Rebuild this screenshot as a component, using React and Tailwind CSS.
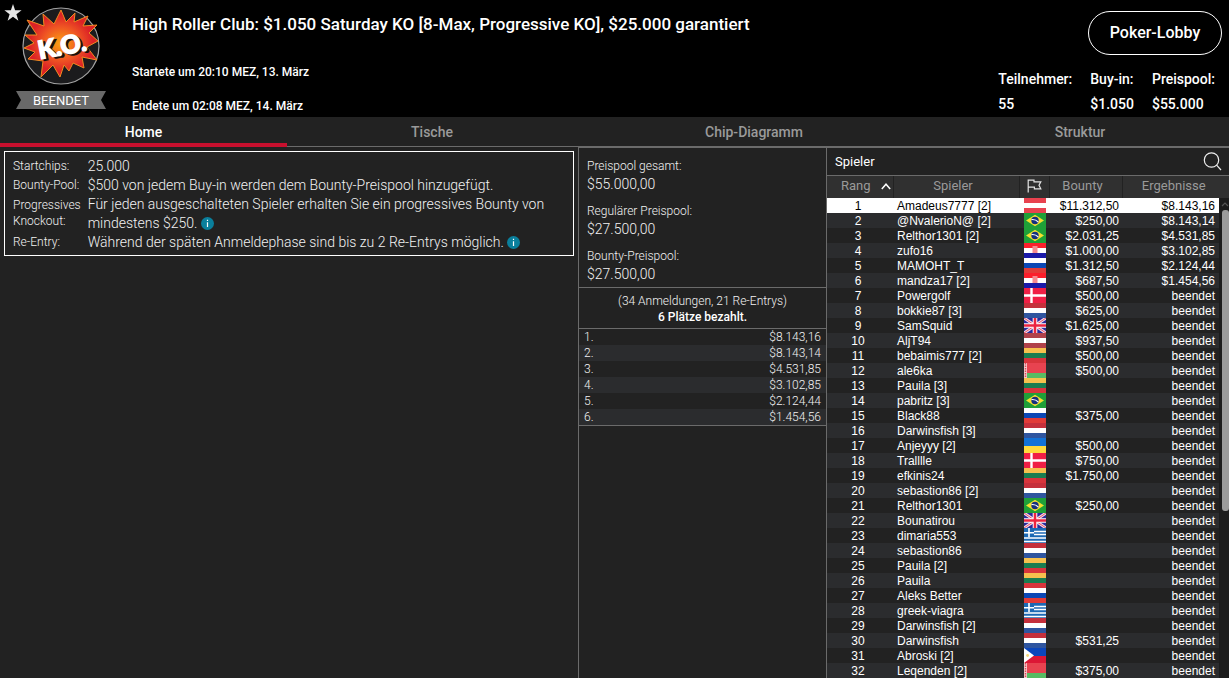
import React from "react";

const players = [
  [1, "Amadeus7777 [2]", "at", "$11.312,50", "$8.143,16"],
  [2, "@NvalerioN@ [2]", "br", "$250,00", "$8.143,14"],
  [3, "Relthor1301 [2]", "br", "$2.031,25", "$4.531,85"],
  [4, "zufo16", "hr", "$1.000,00", "$3.102,85"],
  [5, "MAMOHT_T", "ru", "$1.312,50", "$2.124,44"],
  [6, "mandza17 [2]", "hr", "$687,50", "$1.454,56"],
  [7, "Powergolf", "dk", "$500,00", "beendet"],
  [8, "bokkie87 [3]", "nl", "$625,00", "beendet"],
  [9, "SamSquid", "gb", "$1.625,00", "beendet"],
  [10, "AljT94", "lv", "$937,50", "beendet"],
  [11, "bebaimis777 [2]", "lt", "$500,00", "beendet"],
  [12, "ale6ka", "by", "$500,00", "beendet"],
  [13, "Pauila [3]", "lt", "", "beendet"],
  [14, "pabritz [3]", "br", "", "beendet"],
  [15, "Black88", "ru", "$375,00", "beendet"],
  [16, "Darwinsfish [3]", "nl", "", "beendet"],
  [17, "Anjeyyy [2]", "ua", "$500,00", "beendet"],
  [18, "Tralllle", "dk", "$750,00", "beendet"],
  [19, "efkinis24", "lt", "$1.750,00", "beendet"],
  [20, "sebastion86 [2]", "nl", "", "beendet"],
  [21, "Relthor1301", "br", "$250,00", "beendet"],
  [22, "Bounatirou", "gb", "", "beendet"],
  [23, "dimaria553", "gr", "", "beendet"],
  [24, "sebastion86", "nl", "", "beendet"],
  [25, "Pauila [2]", "lt", "", "beendet"],
  [26, "Pauila", "lt", "", "beendet"],
  [27, "Aleks Better", "ru", "", "beendet"],
  [28, "greek-viagra", "gr", "", "beendet"],
  [29, "Darwinsfish [2]", "nl", "", "beendet"],
  [30, "Darwinsfish", "nl", "$531,25", "beendet"],
  [31, "Abroski [2]", "ph", "", "beendet"],
  [32, "Leqenden [2]", "by", "$375,00", "beendet"],
];

const payouts = ["$8.143,16", "$8.143,14", "$4.531,85", "$3.102,85", "$2.124,44", "$1.454,56"];

const stripes = {
  at: ["#e8424f", "#ffffff", "#e8424f"],
  hr: ["#fb1f2b", "#ffffff", "#1a1aa8"],
  ru: ["#ffffff", "#0b47b5", "#e23b38"],
  nl: ["#c5303c", "#ffffff", "#2f559f"],
  lv: ["#b0414a", "#ffffff", "#b0414a"],
  lt: ["#f6c04e", "#1a7d50", "#d8353c"],
};

function Flag({ code }) {
  const bands = stripes[code];
  return (
    <svg viewBox="0 0 22 15" className="block h-[15px] w-[22px]" aria-label={code}>
      {bands && bands.map((c, i) => <rect key={i} y={i * 5} width="22" height="5" fill={c} />)}
      {code === "hr" && <rect x="8.5" y="3" width="5" height="7" fill="#f58a90" />}
      {code === "br" && (
        <>
          <rect width="22" height="15" fill="#1fa038" />
          <path d="M11 1.8 20 7.5 11 13.2 2 7.5Z" fill="#f7df2f" />
          <circle cx="11" cy="7.5" r="3.7" fill="#16307c" />
          <path d="M7.5 6.6c2.6-.3 5 .5 6.8 2.4" stroke="#fff" strokeWidth="1.1" fill="none" />
        </>
      )}
      {code === "dk" && (
        <>
          <rect width="22" height="15" fill="#f01f45" />
          <path d="M7.5 0V15M0 7.5H22" stroke="#fff" strokeWidth="2.4" />
        </>
      )}
      {code === "gb" && (
        <>
          <rect width="22" height="15" fill="#2b2a9c" />
          <path d="M0 0 22 15M22 0 0 15" stroke="#f4dbe6" strokeWidth="3" />
          <path d="M0 0 22 15M22 0 0 15" stroke="#e5526a" strokeWidth="1" />
          <path d="M11 0V15M0 7.5H22" stroke="#fff" strokeWidth="4.6" />
          <path d="M11 0V15M0 7.5H22" stroke="#ec2440" strokeWidth="2.6" />
        </>
      )}
      {code === "by" && (
        <>
          <rect width="22" height="10" fill="#e84350" />
          <rect y="10" width="22" height="5" fill="#57bb63" />
          <rect width="3" height="15" fill="#f3c9cb" />
          <path d="M1.5 0V15" stroke="#d94a55" strokeWidth="1.4" strokeDasharray="1.5 1" />
        </>
      )}
      {code === "ua" && (
        <>
          <rect width="22" height="8" fill="#1272d6" />
          <rect y="8" width="22" height="7" fill="#ffda3c" />
        </>
      )}
      {code === "gr" && (
        <>
          <rect width="22" height="15" fill="#1c69b4" />
          <path d="M10 3.5H22M10 6.5H22M0 10H22M0 13.5H22" stroke="#fff" strokeWidth="1.3" />
          <path d="M5 0V9M0 4.8H10" stroke="#fff" strokeWidth="1.6" />
        </>
      )}
      {code === "ph" && (
        <>
          <rect width="22" height="8" fill="#0c46bb" />
          <rect y="8" width="22" height="7" fill="#dc1735" />
          <path d="M0 0 10 7.5 0 15Z" fill="#fff" />
          <circle cx="3.6" cy="7.5" r="1.4" fill="#f5d77a" />
        </>
      )}
    </svg>
  );
}

function KnockoutBadge() {
  return (
    <svg viewBox="0 0 78 78" className="block size-[78px]" aria-label="K.O.">
      <defs>
        <radialGradient id="burst" cx="50%" cy="50%" r="50%">
          <stop offset="0" stopColor="#fba40f" />
          <stop offset="0.5" stopColor="#ef5523" />
          <stop offset="0.85" stopColor="#dc2226" />
        </radialGradient>
      </defs>
      <circle cx="39" cy="39" r="38" fill="#1b1b1d" stroke="#a2a2a2" strokeWidth="1.2" />
      <path
        d="M39 3 44 15 53 6 52 15 66 9 61 19 75 18 67 26 76 34 65 40 75 53 60 50 62 61 51 56 47 64 42 58 38 70 31 58 19 70 21 54 6 52 13 45 2 41 12 36 3 28 15 28 5 13 22 19 21 7 32 17Z"
        fill="url(#burst)"
        stroke="#f08a20"
        strokeWidth="1"
        strokeLinejoin="miter"
      />
      <g transform="rotate(-11 39 39)" fontFamily="Lato, sans-serif" fontWeight="900" fontSize="25">
        <text x="42" y="50" textAnchor="middle" fill="#1a0f0c" stroke="#1a0f0c" strokeWidth="1.4">K.O.</text>
        <text x="40" y="48" textAnchor="middle" fill="#fff" stroke="#fff" strokeWidth="1.4">K.O.</text>
      </g>
    </svg>
  );
}

function InfoButton() {
  return (
    <button type="button" aria-label="Info" className="inline-block size-[13px] cursor-pointer align-[-2px]">
      <svg viewBox="0 0 13 13" className="block size-[13px]">
        <circle cx="6.5" cy="6.5" r="6.5" fill="#0a7f9c" />
        <path d="M6.5 5.2V10M6.5 2.8V4.1" stroke="#fff" strokeWidth="1.2" />
      </svg>
    </button>
  );
}

function Stat({ label, value }) {
  return (
    <div>
      <dt>{label}</dt>
      <dd>{value}</dd>
    </div>
  );
}

function Header() {
  return (
    <header className="flex h-[117px] shrink-0 bg-black font-medium">
      <button type="button" aria-label="Favorit" className="mt-1 ml-1 size-[18px] shrink-0">
        <svg viewBox="0 0 18 18" className="block size-[18px]">
          <path d="M9 0 11.1 6.3H17.6L12.4 10.3 14.4 16.8 9 12.8 3.6 16.8 5.6 10.3.4 6.3H6.9Z" fill="#e6e6e6" />
        </svg>
      </button>
      <div className="-ml-1.5 flex w-[90px] shrink-0 flex-col items-center pt-[7px]">
        <KnockoutBadge />
        <div className="mt-1.5 grid h-[18px] w-[90px]">
          <svg viewBox="0 0 90 18" className="col-start-1 row-start-1 h-[18px] w-[90px]">
            <path d="M0 0H90L85 9 90 18H0L5 9Z" fill="#696969" />
          </svg>
          <span className="col-start-1 row-start-1 text-center text-[13px] leading-5 font-normal">BEENDET</span>
        </div>
      </div>
      <div className="ml-[26px] flex min-w-0 flex-1 flex-col pt-[14px]">
        <h1 className="text-[17px] leading-5 font-medium">
          High Roller Club: $1.050 Saturday KO [8-Max, Progressive KO], $25.000 garantiert
        </h1>
        <p className="mt-[30px] text-[12px] leading-4">Startete um 20:10 MEZ, 13. März</p>
        <p className="mt-[18px] text-[12px] leading-4">Endete um 02:08 MEZ, 14. März</p>
      </div>
      <div className="flex shrink-0 flex-col items-end pt-[11px] pr-[7px]">
        <button type="button" className="h-11 w-[134px] rounded-full border border-white text-[16px]">
          Poker-Lobby
        </button>
        <dl className="mt-3 flex gap-[18px] pr-[7px] text-[14px] leading-[25px]">
          <Stat label="Teilnehmer:" value="55" />
          <Stat label="Buy-in:" value="$1.050" />
          <Stat label="Preispool:" value="$55.000" />
        </dl>
      </div>
    </header>
  );
}

function Tabs() {
  return (
    <nav className="grid h-[30px] shrink-0 grid-cols-[287fr_290fr_354fr_298fr] border-b border-[#6b6b6b] text-center text-[14px] leading-[30px] font-medium text-[#9a9a9a]">
      <a href="#home" aria-current="page" className="-mb-px text-white shadow-[inset_0_-4px_0_#c8102e]">
        Home
      </a>
      <a href="#tische" className="-mb-px">Tische</a>
      <a href="#chips" className="-mb-px">Chip-Diagramm</a>
      <a href="#struktur" className="-mb-px">Struktur</a>
    </nav>
  );
}

function Details() {
  return (
    <section className="min-w-0 flex-1 p-1">
      <dl className="grid grid-cols-[auto_1fr] gap-x-[7px] border border-white px-2 pt-[5px] pb-[3px] text-[14px] leading-[19px] font-light text-[#f2f2f2]">
        <dt className="text-[12px]">Startchips:</dt>
        <dd>25.000</dd>
        <dt className="text-[12px]">Bounty-Pool:</dt>
        <dd>$500 von jedem Buy-in werden dem Bounty-Preispool hinzugefügt.</dd>
        <dt className="pt-0.5 text-[12px] leading-4">Progressives<br />Knockout:</dt>
        <dd>
          Für jeden ausgeschalteten Spieler erhalten Sie ein progressives Bounty von mindestens $250. <InfoButton />
        </dd>
        <dt className="text-[12px]">Re-Entry:</dt>
        <dd>
          Während der späten Anmeldephase sind bis zu 2 Re-Entrys möglich. <InfoButton />
        </dd>
      </dl>
    </section>
  );
}

function PoolItem({ label, value }) {
  return (
    <div>
      <dt className="text-[12px] leading-[17px]">{label}</dt>
      <dd className="text-[14px] leading-[18px]">{value}</dd>
    </div>
  );
}

function PrizePool() {
  return (
    <section className="w-[248px] shrink-0 border-t border-l border-[#6b6b6b] font-light text-[#f2f2f2]">
      <dl className="flex flex-col gap-2.5 px-2 pt-2.5 pb-1">
        <PoolItem label="Preispool gesamt:" value="$55.000,00" />
        <PoolItem label="Regulärer Preispool:" value="$27.500,00" />
        <PoolItem label="Bounty-Preispool:" value="$27.500,00" />
      </dl>
      <div className="border-y border-[#6b6b6b] pt-[5px] pb-[3px] text-center text-[12px] leading-4">
        <p>(34 Anmeldungen, 21 Re-Entrys)</p>
        <p className="font-medium text-white">6 Plätze bezahlt.</p>
      </div>
      <table className="w-full border-b border-[#6b6b6b] text-[12px] leading-4">
        <tbody>
          {payouts.map((p, i) => (
            <tr key={i} className="h-4 even:bg-[#2b2c2e]">
              <td className="pl-[5px]">{i + 1}.</td>
              <td className="pr-[5px] text-right">{p}</td>
            </tr>
          ))}
        </tbody>
      </table>
    </section>
  );
}

function Players() {
  return (
    <section className="flex w-[403px] shrink-0 flex-col border-t border-l border-[#6b6b6b]">
      <div className="flex h-7 shrink-0 items-center justify-between border-b border-[#6b6b6b] pr-[7px] pl-2">
        <h2 className="text-[13px] font-normal">Spieler</h2>
        <button type="button" aria-label="Suchen" className="size-[19px]">
          <svg viewBox="0 0 19 19" className="block size-[19px]" fill="none" stroke="#f0f0f0" strokeWidth="1.2">
            <circle cx="8.5" cy="8" r="7.2" />
            <path d="M13.6 13.2 18 18" />
          </svg>
        </button>
      </div>
      <div className="flex min-h-0 flex-1 overflow-hidden">
        <div className="min-w-0 flex-1">
          <table className="w-full table-fixed border-collapse font-['Liberation_Sans',sans-serif] text-[12px] leading-[14px] text-white">
            <colgroup>
              <col className="w-[66px]" />
              <col />
              <col className="w-[30px]" />
              <col className="w-[73px]" />
              <col className="w-[97px]" />
            </colgroup>
            <thead className="bg-[#303030] font-[Roboto,sans-serif] text-[13px] text-[#9a9a9a]">
              <tr className="h-[22px]">
                <th className="border-r border-[#222] pb-0.5 font-normal">
                  <span className="flex items-center justify-end gap-2.5 pr-0.5">
                    Rang
                    <svg viewBox="0 0 10 7" className="h-[7px] w-[10px]" fill="none" stroke="#fff" strokeWidth="1.5">
                      <path d="M.8 6 5 1.2 9.2 6" />
                    </svg>
                  </span>
                </th>
                <th className="border-r border-[#222] pr-1.5 pb-0.5 font-normal">Spieler</th>
                <th className="border-r border-[#222] pb-0.5">
                  <svg viewBox="0 0 15 14" className="mx-auto h-[14px] w-[15px]" fill="none" stroke="#e4e4e4" strokeWidth="1.2" aria-label="Land">
                    <path d="M1.2 13.5V1.2H7V2.8H13.8L12 6.2 13.8 9.8H7.4V8.2H1.2" />
                  </svg>
                </th>
                <th className="border-r border-[#222] pr-1.5 pb-0.5 font-normal">Bounty</th>
                <th className="pb-0.5 pl-1.5 font-normal">Ergebnisse</th>
              </tr>
            </thead>
            <tbody>
              {players.map(([rank, name, flag, bounty, result]) => (
                <tr key={rank} className="h-[15px] first:bg-white first:text-black even:bg-[#2b2c2e]">
                  <td className="pt-px pr-1 text-center">{rank}</td>
                  <td className="truncate pt-px pl-1">{name}</td>
                  <td className="pl-[5px]"><Flag code={flag} /></td>
                  <td className="pt-px pr-[3px] text-right">{bounty}</td>
                  <td className="pt-px pr-1 text-right">{result}</td>
                </tr>
              ))}
            </tbody>
          </table>
        </div>
        <div className="flex w-2.5 shrink-0 flex-col items-end bg-[#1c1c1c]">
          <div className="h-[22px] w-full shrink-0 bg-[#303030]" />
          <svg viewBox="0 0 8 12" className="h-3 w-2 shrink-0" fill="none" stroke="#555" strokeWidth="1.2">
            <path d="M1 8 4 5 7 8" />
          </svg>
          <div className="h-[60%] w-[7px] rounded-[3px] bg-[#9b9b9b]" />
        </div>
      </div>
    </section>
  );
}

export default function App() {
  return (
    <div className="flex h-screen flex-col overflow-hidden bg-[#222] font-[Roboto,sans-serif] text-white">
      <Header />
      <Tabs />
      <main className="flex min-h-0 flex-1">
        <Details />
        <PrizePool />
        <Players />
      </main>
    </div>
  );
}
